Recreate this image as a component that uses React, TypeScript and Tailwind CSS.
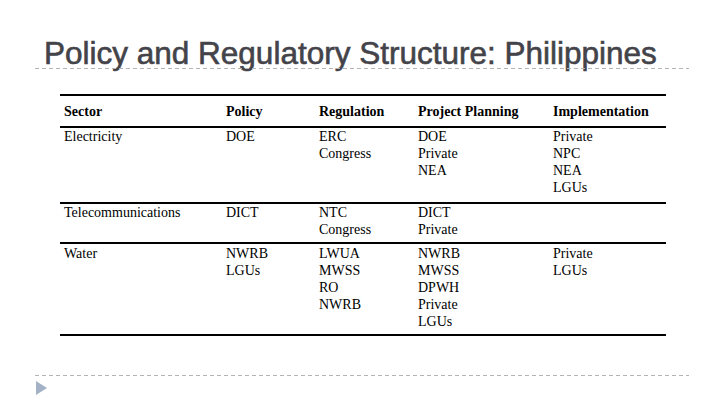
import React from "react";

const rows: { cells: string[][]; h: string; pt: string }[] = [
  {
    cells: [["Electricity"], ["DOE"], ["ERC", "Congress"], ["DOE", "Private", "NEA"], ["Private", "NPC", "NEA", "LGUs"]],
    h: "h-[74px]",
    pt: "pt-0",
  },
  {
    cells: [["Telecommunications"], ["DICT"], ["NTC", "Congress"], ["DICT", "Private"], []],
    h: "h-[38px]",
    pt: "pt-0",
  },
  {
    cells: [["Water"], ["NWRB", "LGUs"], ["LWUA", "MWSS", "RO", "NWRB"], ["NWRB", "MWSS", "DPWH", "Private", "LGUs"], ["Private", "LGUs"]],
    h: "h-[89px]",
    pt: "pt-[1px]",
  },
];

const headers = ["Sector", "Policy", "Regulation", "Project Planning", "Implementation"];

function Dashed({ className }: { className: string }) {
  return (
    <div
      className={`h-px bg-[linear-gradient(to_right,#b4b4b4_4px,transparent_4px)] bg-[length:7px_1px] bg-repeat-x ${className}`}
    />
  );
}

export default function App() {
  return (
    <div className="w-[720px] h-[405px] bg-white overflow-hidden flex flex-col">
      <div className="pt-[38px] pl-[44px] h-[68px]">
        <h1 className="font-['Liberation_Sans',Arial,sans-serif] text-[31.5px] leading-[31px] text-[#434349] [-webkit-text-stroke:0.6px_#434349] whitespace-nowrap">
          Policy and Regulatory Structure: Philippines
        </h1>
      </div>
      <Dashed className="ml-[35px] w-[654px]" />
      <div className="ml-[60px] w-[606px] mt-[25px] border-t-2 border-black font-['Liberation_Serif','Times_New_Roman',serif] text-[14px] leading-[17px] text-black">
        <div className="grid grid-cols-[162px_93px_99px_135px_117px] h-[32px] items-center border-b-2 border-black font-bold">
          {headers.map((h) => (
            <div key={h} className="pl-1 whitespace-nowrap">
              {h}
            </div>
          ))}
        </div>
        {rows.map((r, i) => (
          <div
            key={i}
            className={`grid grid-cols-[162px_93px_99px_135px_117px] border-b-2 border-black ${r.h} ${r.pt} box-content`}
          >
            {r.cells.map((c, j) => (
              <div key={j} className="pl-1 flex flex-col whitespace-nowrap">
                {c.map((t, k) => (
                  <span key={k}>{t}</span>
                ))}
              </div>
            ))}
          </div>
        ))}
      </div>
      <Dashed className="ml-[35px] w-[654px] mt-[39px]" />
      <div className="ml-[36px] mt-[5px]">
        <svg width="11" height="14" viewBox="0 0 11 14">
          <polygon points="0,0 11,7 0,14" fill="#a3b2c6" />
        </svg>
      </div>
    </div>
  );
}
